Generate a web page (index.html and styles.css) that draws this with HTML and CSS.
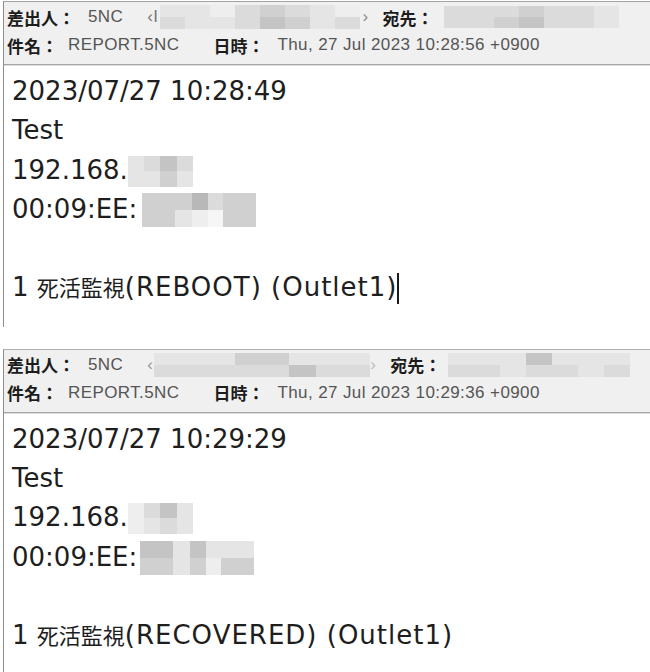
FILE: index.html
```html
<!DOCTYPE html>
<html lang="ja">
<head>
<meta charset="utf-8">
<title>REPORT:5NC</title>
<link rel="stylesheet" href="styles.css">
</head>
<body>
<div class="mail mail-first">
  <div class="head">
    <div class="row">
      <span class="lab">差出人：</span><span class="val v-from">5NC</span><span class="val v-lt">‹I</span><span class="mosaic m-h1a"><i class="t2"></i><i class="t2"></i><i class="t1"></i><i class="t3"></i><i class="t4"></i><i class="t3"></i><i class="t2"></i><i class="t1"></i><i class="t3"></i><i class="t2"></i><i class="t2"></i><i class="t3"></i><i class="t5"></i><i class="t4"></i><i class="t2"></i><i class="t3"></i></span><span class="val v-gt">›</span><span class="lab l-to">宛先：</span><span class="mosaic m-h1b"><i class="t3"></i><i class="t3"></i><i class="t3"></i><i class="t4"></i><i class="t3"></i><i class="t3"></i><i class="t2"></i><i class="t3"></i><i class="t3"></i><i class="t4"></i><i class="t5"></i><i class="t3"></i><i class="t3"></i><i class="t2"></i></span>
    </div>
    <div class="row">
      <span class="lab">件名：</span><span class="val v-subj">REPORT.5NC</span><span class="lab l-date">日時：</span><span class="val v-date">Thu, 27 Jul 2023 10:28:56 +0900</span>
    </div>
  </div>
  <div class="body">
    <div class="line">2023/07/27 10:28:49</div>
    <div class="line">Test</div>
    <div class="line">192.168.<span class="mosaic m-ip m-ip1"><i class="t2"></i><i class="t3"></i><i class="t5"></i><i class="t3"></i><i class="t2"></i><i class="t2"></i><i class="t4"></i><i class="t2"></i></span></div>
    <div class="line">00:09:EE:<span class="mosaic m-mac m-mac1"><i class="t4"></i><i class="t4"></i><i class="t6"></i><i class="t3"></i><i class="t4"></i><i class="t4"></i><i class="t2"></i><i class="t1"></i><i class="t0"></i><i class="t4"></i></span></div>
    <div class="line">&nbsp;</div>
    <div class="line">1 <span class="jp">死活監視</span><span class="tail">(REBOOT) (Outlet1)</span><span class="caret"></span></div>
  </div>
</div>

<div class="mail mail-second">
  <div class="head">
    <div class="row">
      <span class="lab">差出人：</span><span class="val v-from">5NC</span><span class="val v-lt2">‹</span><span class="mosaic m-h2a"><i class="t2"></i><i class="t2"></i><i class="t2"></i><i class="t4"></i><i class="t4"></i><i class="t2"></i><i class="t2"></i><i class="t2"></i><i class="t3"></i><i class="t3"></i><i class="t3"></i><i class="t3"></i><i class="t3"></i><i class="t5"></i><i class="t3"></i><i class="t3"></i></span><span class="val v-gt2">›</span><span class="lab l-to2">宛先：</span><span class="mosaic m-h2b"><i class="t2"></i><i class="t2"></i><i class="t2"></i><i class="t5"></i><i class="t2"></i><i class="t2"></i><i class="t2"></i><i class="t3"></i><i class="t3"></i><i class="t2"></i><i class="t3"></i><i class="t3"></i><i class="t2"></i><i class="t3"></i></span>
    </div>
    <div class="row">
      <span class="lab">件名：</span><span class="val v-subj">REPORT.5NC</span><span class="lab l-date">日時：</span><span class="val v-date">Thu, 27 Jul 2023 10:29:36 +0900</span>
    </div>
  </div>
  <div class="body body-last">
    <div class="line">2023/07/27 10:29:29</div>
    <div class="line">Test</div>
    <div class="line">192.168.<span class="mosaic m-ip m-ip2"><i class="t1"></i><i class="t3"></i><i class="t5"></i><i class="t2"></i><i class="t1"></i><i class="t2"></i><i class="t3"></i><i class="t2"></i></span></div>
    <div class="line">00:09:EE:<span class="mosaic m-mac m-mac2"><i class="t5"></i><i class="t2"></i><i class="t5"></i><i class="t2"></i><i class="t2"></i><i class="t4"></i><i class="t2"></i><i class="t4"></i><i class="t1"></i><i class="t4"></i></span></div>
    <div class="line">&nbsp;</div>
    <div class="line">1 <span class="jp">死活監視</span><span class="tail">(RECOVERED) (Outlet1)</span></div>
  </div>
</div>
</body>
</html>
```

FILE: styles.css
```css
html, body {
  margin: 0;
  padding: 0;
  background: #ffffff;
}

.mail {
  margin-left: 3px;
  border-left: 1px solid #8e8e8e;
}

.mail-first {
  margin-top: 1px;
  border-top: 1px solid #a3a3a3;
}

.mail-second {
  margin-top: 22px;
  border-top: 1px solid #b0b0b0;
}

.head {
  background: #f0f0f0;
  padding: 1px 0 5px 3px;
  border-bottom: 1px solid #a5a5a5;
  box-shadow: 0 1px 0 #dedede;
}

.row {
  display: flex;
  align-items: center;
  height: 28px;
  white-space: nowrap;
}

.lab {
  font-family: "Noto Sans CJK JP", sans-serif;
  font-weight: 700;
  font-size: 17px;
  color: #1c1c1c;
}

.val {
  font-family: "Liberation Sans", Arial, sans-serif;
  font-size: 17px;
  color: #555555;
  letter-spacing: 0.4px;
}

.v-from { margin-left: 13px; }
.v-lt { margin-left: 24px; color: #777; }
.v-lt2 { margin-left: 24px; color: #999; }
.v-gt { margin-left: 2px; color: #888; }
.v-gt2 { margin-left: 0; color: #bbb; }
.l-to { margin-left: 14px; }
.l-to2 { margin-left: 14px; }
.v-subj { margin-left: 10px; }
.l-date { margin-left: 34px; }
.v-date { margin-left: 13px; }

.mosaic {
  display: inline-grid;
  flex: none;
}

.mosaic i {
  display: block;
}

.t0 { background: #f6f6f6; }
.t1 { background: #eeeeee; }
.t2 { background: #e5e5e5; }
.t3 { background: #dbdbdb; }
.t4 { background: #d0d0d0; }
.t5 { background: #c4c4c4; }
.t6 { background: #b8b8b8; }

.m-h1a {
  grid-template-columns: repeat(8, 25px);
  grid-template-rows: 12px 12px;
  margin-left: 2px;
}

.m-h1b {
  grid-template-columns: repeat(7, 25px);
  grid-template-rows: 11px 11px;
  margin-left: 11px;
}

.m-h2a {
  grid-template-columns: repeat(8, 27px);
  grid-template-rows: 12px 12px;
  margin-left: 1px;
}

.m-h2b {
  grid-template-columns: repeat(7, 26px);
  grid-template-rows: 12px 12px;
  margin-left: 7px;
}

.body {
  padding: 7px 0 19px 8px;
  font-family: "DejaVu Sans", "Noto Sans CJK JP", sans-serif;
  font-size: 26px;
  line-height: 39.3px;
  color: #1e1e1e;
  white-space: nowrap;
}

.line {
  height: 39.3px;
}

.body-last {
  padding-bottom: 40px;
}

.jp {
  font-family: "Noto Sans CJK JP", sans-serif;
  font-size: 22px;
  line-height: 28px;
}

.tail {
  letter-spacing: 1px;
}

.m-ip {
  grid-template-columns: 16px 16px 17px 16px;
  grid-template-rows: 15px 16px;
  vertical-align: middle;
}

.m-mac {
  grid-template-columns: 33px 17px 16px 15px 33px;
  grid-template-rows: 17px 17px;
  vertical-align: middle;
}

.m-mac1 { margin-left: 5px; }
.m-mac2 { margin-left: 3px; }

.caret {
  display: inline-block;
  width: 1.5px;
  height: 31px;
  background: #1a1a1a;
  vertical-align: middle;
  margin-left: 0;
}
```
